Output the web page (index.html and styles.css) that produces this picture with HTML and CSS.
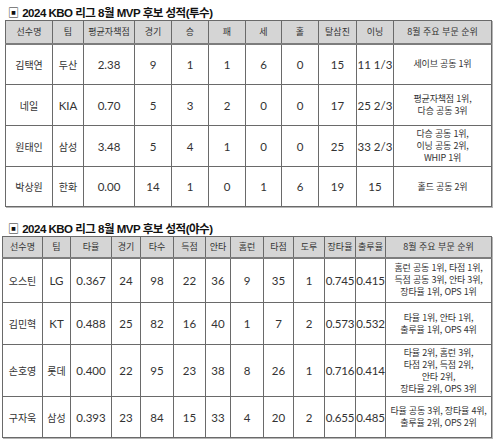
FILE: index.html
```html
<!DOCTYPE html>
<html lang="ko">
<head>
<meta charset="utf-8">
<link rel="stylesheet" href="styles.css">
</head>
<body>
<div class="page">
  <div class="title t1"><span class="mark">▣</span> 2024 KBO 리그 8월 MVP 후보 성적(투수)</div>
  <table class="stats pitch">
    <colgroup>
      <col class="w47"><col class="w31"><col class="w51"><col class="w37"><col class="w37"><col class="w37"><col class="w36"><col class="w37"><col class="w38"><col class="w37"><col class="w98">
    </colgroup>
    <thead>
      <tr class="hd1"><th>선수명</th><th>팀</th><th>평균자책점</th><th>경기</th><th>승</th><th>패</th><th>세</th><th>홀</th><th>탈삼진</th><th>이닝</th><th>8월 주요 부문 순위</th></tr>
    </thead>
    <tbody>
      <tr class="r41"><td class="ko">김택연</td><td class="ko">두산</td><td>2.38</td><td>9</td><td>1</td><td>1</td><td>6</td><td>0</td><td>15</td><td>11 1/3</td><td class="ko note">세이브 공동 1위</td></tr>
      <tr class="r41"><td class="ko">네일</td><td>KIA</td><td>0.70</td><td>5</td><td>3</td><td>2</td><td>0</td><td>0</td><td>17</td><td>25 2/3</td><td class="ko note">평균자책점 1위,<br>다승 공동 3위</td></tr>
      <tr class="r41"><td class="ko">원태인</td><td class="ko">삼성</td><td>3.48</td><td>5</td><td>4</td><td>1</td><td>0</td><td>0</td><td>25</td><td>33 2/3</td><td class="ko note">다승 공동 1위,<br>이닝 공동 2위,<br>WHIP 1위</td></tr>
      <tr class="r40"><td class="ko">박상원</td><td class="ko">한화</td><td>0.00</td><td>14</td><td>1</td><td>0</td><td>1</td><td>6</td><td>19</td><td>15</td><td class="ko note">홀드 공동 2위</td></tr>
    </tbody>
  </table>

  <div class="title t2"><span class="mark">▣</span> 2024 KBO 리그 8월 MVP 후보 성적(야수)</div>
  <table class="stats bat">
    <colgroup>
      <col class="w40"><col class="w28"><col class="w41"><col class="w29"><col class="w33"><col class="w32"><col class="w25"><col class="w33"><col class="w30"><col class="w31"><col class="w31"><col class="w30"><col class="w106">
    </colgroup>
    <thead>
      <tr class="hd2"><th>선수명</th><th>팀</th><th>타율</th><th>경기</th><th>타수</th><th>득점</th><th>안타</th><th>홈런</th><th>타점</th><th>도루</th><th>장타율</th><th>출루율</th><th>8월 주요 부문 순위</th></tr>
    </thead>
    <tbody>
      <tr class="r45"><td class="ko">오스틴</td><td>LG</td><td>0.367</td><td>24</td><td>98</td><td>22</td><td>36</td><td>9</td><td>35</td><td>1</td><td class="tight">0.745</td><td class="tight">0.415</td><td class="ko note">홈런 공동 1위, 타점 1위,<br>득점 공동 3위, 안타 3위,<br>장타율 1위, OPS 1위</td></tr>
      <tr class="r42"><td class="ko">김민혁</td><td>KT</td><td>0.488</td><td>25</td><td>82</td><td>16</td><td>40</td><td>1</td><td>7</td><td>2</td><td class="tight">0.573</td><td class="tight">0.532</td><td class="ko note">타율 1위, 안타 1위,<br>출루율 1위, OPS 4위</td></tr>
      <tr class="r52"><td class="ko">손호영</td><td class="ko">롯데</td><td>0.400</td><td>22</td><td>95</td><td>23</td><td>38</td><td>8</td><td>26</td><td>1</td><td class="tight">0.716</td><td class="tight">0.414</td><td class="ko note">타율 2위, 홈런 3위,<br>타점 2위, 득점 2위,<br>안타 2위,<br>장타율 2위, OPS 3위</td></tr>
      <tr class="r41"><td class="ko">구자욱</td><td class="ko">삼성</td><td>0.393</td><td>23</td><td>84</td><td>15</td><td>33</td><td>4</td><td>20</td><td>2</td><td class="tight">0.655</td><td class="tight">0.485</td><td class="ko note">타율 공동 3위, 장타율 4위,<br>출루율 2위, OPS 2위</td></tr>
    </tbody>
  </table>
</div>
</body>
</html>
```

FILE: styles.css
```css
html, body {
  margin: 0;
  padding: 0;
  background: #ffffff;
}
body {
  font-family: "Lato", "Noto Sans CJK KR", sans-serif;
  color: #2a2a2a;
  width: 500px;
  height: 443px;
  overflow: hidden;
}
.page {
  padding-top: 4px;
}
.title {
  font-family: "Liberation Sans", "Noto Sans CJK KR", sans-serif;
  font-weight: bold;
  font-size: 11.5px;
  line-height: 16px;
  height: 16px;
  letter-spacing: -0.5px;
  color: #111;
  padding-left: 8px;
}
.mark {
  font-family: "Noto Sans CJK KR", sans-serif;
  font-weight: normal;
  font-size: 11px;
  margin-right: 1px;
}
.t2 {
  margin-top: 13px;
}
.stats {
  border-collapse: collapse;
  table-layout: fixed;
  border: 1px solid #3a3a3a;
  box-shadow: 1px 1px 0 #b5b5b5;
}
.pitch {
  margin-left: 5px;
  width: 486px;
}
.bat {
  margin-left: 2px;
  width: 489px;
}
.stats th,
.stats td {
  border: 1px solid #6a6a6a;
  padding: 0;
  text-align: center;
  vertical-align: middle;
  white-space: nowrap;
}
.stats th {
  background: #d5d5d5;
  font-family: "Noto Sans CJK KR", sans-serif;
  font-weight: normal;
  font-size: 9px;
  color: #333;
  border-bottom: 2px solid #7d7d7d;
}
.stats td {
  font-size: 11.5px;
  color: #333;
}
.stats td.ko {
  font-family: "Noto Sans CJK KR", sans-serif;
  font-size: 10px;
}
.stats td.note {
  font-size: 9px;
  line-height: 12px;
  letter-spacing: -0.2px;
}
.stats td.tight {
  font-size: 11.5px;
  letter-spacing: -0.2px;
}
.hd1 { height: 23px; }
.hd2 { height: 21px; }
.r40 { height: 40px; }
.r41 { height: 41px; }
.r42 { height: 42px; }
.r45 { height: 45px; }
.r52 { height: 52px; }

.w25 { width: 25px; }
.w28 { width: 28px; }
.w29 { width: 29px; }
.w30 { width: 30px; }
.w31 { width: 31px; }
.w32 { width: 32px; }
.w33 { width: 33px; }
.w36 { width: 36px; }
.w37 { width: 37px; }
.w38 { width: 38px; }
.w40 { width: 40px; }
.w41 { width: 41px; }
.w47 { width: 47px; }
.w51 { width: 51px; }
.w98 { width: 98px; }
.w106 { width: 106px; }
```
